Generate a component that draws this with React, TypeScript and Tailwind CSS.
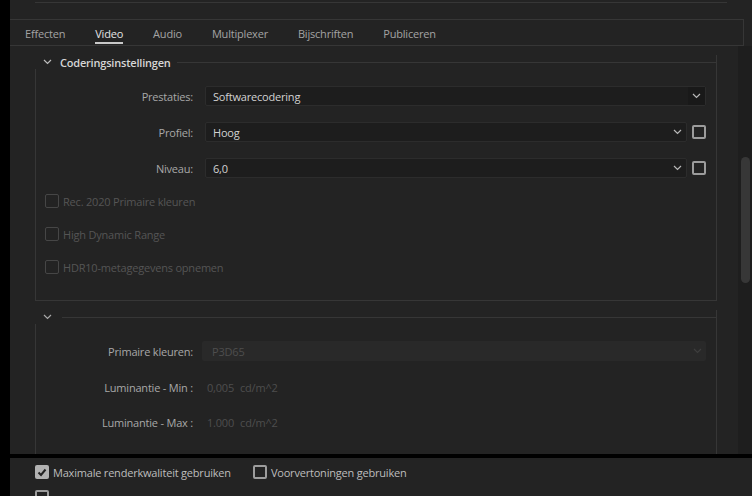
import React from "react";

function Chevron({ className = "" }: { className?: string }) {
  return (
    <svg width="9" height="6" viewBox="0 0 9 6" className={className}>
      <path d="M1 1l3.5 3.5L8 1" stroke="currentColor" fill="none" strokeWidth="1.2" />
    </svg>
  );
}

function Box({ disabled = false }: { disabled?: boolean }) {
  return (
    <div
      className={
        disabled
          ? "h-[14px] w-[14px] shrink-0 rounded-[2px] border-[1.5px] border-[#464646]"
          : "h-[14px] w-[14px] shrink-0 rounded-[2px] border-2 border-[#9c9c9c]"
      }
    />
  );
}

function Select({ value, chevBg = false }: { value: string; chevBg?: boolean }) {
  return (
    <div className="flex h-[20px] flex-1 items-center rounded-[2px] border border-[#2c2c2c] bg-[#1d1d1d] pl-[7px] text-[#d2d2d2]">
      <span className="flex-1">{value}</span>
      <span
        className={
          chevBg
            ? "flex h-[18px] w-[17px] items-center justify-center bg-[#191919] text-[#b8b8b8]"
            : "flex h-[18px] w-[17px] items-center justify-center text-[#b8b8b8]"
        }
      >
        <Chevron />
      </span>
    </div>
  );
}

export default function App() {
  const tabs = ["Effecten", "Video", "Audio", "Multiplexer", "Bijschriften", "Publiceren"];
  return (
    <div className="flex h-[496px] w-[752px] overflow-hidden bg-[#232323] font-['Open_Sans','Noto_Sans',sans-serif] text-[11px] leading-none tracking-[-0.2px]">
      <div className="w-[10px] shrink-0 bg-black" />
      <div className="flex flex-1 flex-col">
        {/* top remnant */}
        <div className="h-[19px] shrink-0">
          <div className="ml-[25px] mt-[2px] h-px w-[692px] bg-[#363636]" />
        </div>
        {/* tabs */}
        <div className="mr-[8px] flex h-[27px] shrink-0 items-center gap-[30px] border-y border-r border-[#363636] pl-[15px]">
          {tabs.map((t) => (
            <div key={t} className="relative flex h-full items-center pt-[2px]">
              <span className={t === "Video" ? "text-[#e4e4e4]" : "text-[#a3a3a3]"}>{t}</span>
              {t === "Video" && (
                <div className="absolute bottom-[1px] left-0 right-0 h-[2px] bg-[#c8c8c8]" />
              )}
            </div>
          ))}
        </div>
        {/* content */}
        <div className="flex h-[408px] shrink-0">
          <div className="flex-1 overflow-hidden pl-[25px] pt-[16px]">
            {/* group 1 */}
            <div className="w-[682px] border-x border-b border-[#363636] pb-[26px]">
              <div className="-ml-px -mt-[7px] flex h-[14px] items-center bg-[#232323]">
                <div className="w-[25px] pl-[8px] text-[#bdbdbd]">
                  <Chevron />
                </div>
                <span className="font-semibold text-[#d6d6d6]">Coderingsinstellingen</span>
                <div className="ml-[6px] -mr-px h-px flex-1 bg-[#363636]" />
              </div>
              <div className="mt-[17px] flex flex-col gap-[16px]">
                <div className="flex items-center">
                  <span className="w-[157px] text-right text-[#a8a8a8]">Prestaties:</span>
                  <div className="ml-[12px] mr-[10px] flex flex-1">
                    <Select value="Softwarecodering" chevBg />
                  </div>
                </div>
                <div className="flex items-center">
                  <span className="w-[157px] text-right text-[#a8a8a8]">Profiel:</span>
                  <div className="ml-[12px] mr-[10px] flex flex-1 items-center gap-[5px]">
                    <Select value="Hoog" />
                    <Box />
                  </div>
                </div>
                <div className="flex items-center">
                  <span className="w-[157px] text-right text-[#a8a8a8]">Niveau:</span>
                  <div className="ml-[12px] mr-[10px] flex flex-1 items-center gap-[5px]">
                    <Select value="6,0" />
                    <Box />
                  </div>
                </div>
              </div>
              <div className="mt-[16px] flex flex-col gap-[19px] pl-[9px] text-[#555555]">
                <div className="flex items-center gap-[4px]">
                  <Box disabled />
                  <span>Rec. 2020 Primaire kleuren</span>
                </div>
                <div className="flex items-center gap-[4px]">
                  <Box disabled />
                  <span>High Dynamic Range</span>
                </div>
                <div className="flex items-center gap-[4px]">
                  <Box disabled />
                  <span>HDR10-metagegevens opnemen</span>
                </div>
              </div>
            </div>
            {/* group 2 */}
            <div className="mt-[16px] h-[200px] w-[682px] border-x border-[#363636]">
              <div className="-ml-px -mt-[7px] flex h-[14px] items-center bg-[#232323]">
                <div className="w-[27px] pl-[8px] text-[#a8a8a8]">
                  <Chevron />
                </div>
                <div className="-mr-px h-px flex-1 bg-[#363636]" />
              </div>
              <div className="mt-[17px] flex flex-col gap-[16px]">
                <div className="flex items-center">
                  <span className="w-[157px] text-right text-[#a8a8a8]">Primaire kleuren:</span>
                  <div className="ml-[9px] mr-[10px] flex h-[20px] flex-1 items-center rounded-[2px] bg-[#292929] pl-[10px] text-[#4e4e4e]">
                    <span className="flex-1">P3D65</span>
                    <span className="flex w-[17px] justify-center text-[#3e3e3e]">
                      <Chevron />
                    </span>
                  </div>
                </div>
                <div className="flex h-[20px] items-center">
                  <span className="w-[157px] text-right text-[#a8a8a8]">Luminantie - Min :</span>
                  <span className="ml-[14px] text-[#4e4e4e]">0,005</span>
                  <span className="ml-[6px] text-[#4e4e4e]">cd/m^2</span>
                </div>
                <div className="-mt-px flex h-[20px] items-center">
                  <span className="w-[157px] text-right text-[#a8a8a8]">Luminantie - Max :</span>
                  <span className="ml-[14px] text-[#4e4e4e]">1.000</span>
                  <span className="ml-[6px] text-[#4e4e4e]">cd/m^2</span>
                </div>
              </div>
            </div>
          </div>
          {/* scrollbar */}
          <div className="w-[14px] shrink-0 bg-[#1e1e1e] pt-[111px]">
            <div className="ml-[3px] h-[126px] w-[9px] rounded-full bg-[#373737]" />
          </div>
        </div>
        <div className="h-[4px] shrink-0 bg-black" />
        {/* bottom */}
        <div className="flex-1 pl-[25px] pt-[7px] text-[#bdbdbd]">
          <div className="flex items-center">
            <div className="flex h-[14px] w-[14px] items-center justify-center rounded-[2px] bg-[#b2b2b2]">
              <svg width="10" height="9" viewBox="0 0 10 9">
                <path d="M1.5 4.5l2.5 2.5L8.5 1.5" stroke="#232323" strokeWidth="2" fill="none" />
              </svg>
            </div>
            <span className="ml-[4px]">Maximale renderkwaliteit gebruiken</span>
            <div className="ml-[22px]">
              <Box />
            </div>
            <span className="ml-[4px]">Voorvertoningen gebruiken</span>
          </div>
          <div className="mt-[11px] flex items-center">
            <Box />
          </div>
        </div>
      </div>
    </div>
  );
}
